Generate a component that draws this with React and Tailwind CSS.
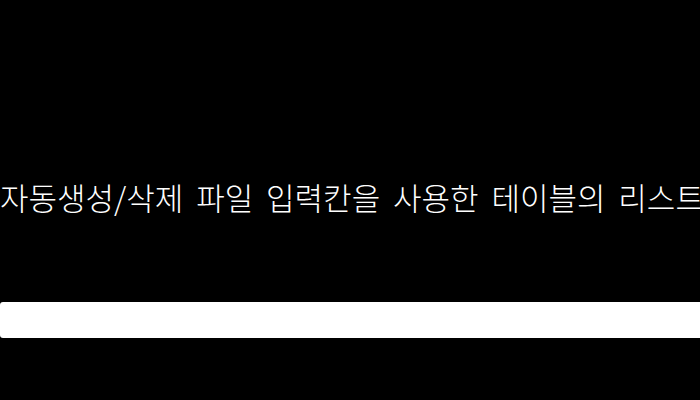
export default function App() {
  return (
    <div className="w-[700px] h-[400px] bg-black overflow-hidden" style={{ fontFamily: '"Noto Sans CJK KR", "Noto Sans", sans-serif' }}>
      <div className="pt-[177px]">
        <h1 className="text-[31px] leading-[40px] text-white font-light [word-spacing:6px] whitespace-nowrap">
          자동생성/삭제 파일 입력칸을 사용한 테이블의 리스트
        </h1>
      </div>
      <div className="mt-[85px] w-[720px] h-[36px] bg-white rounded-[3px]"></div>
    </div>
  );
}
